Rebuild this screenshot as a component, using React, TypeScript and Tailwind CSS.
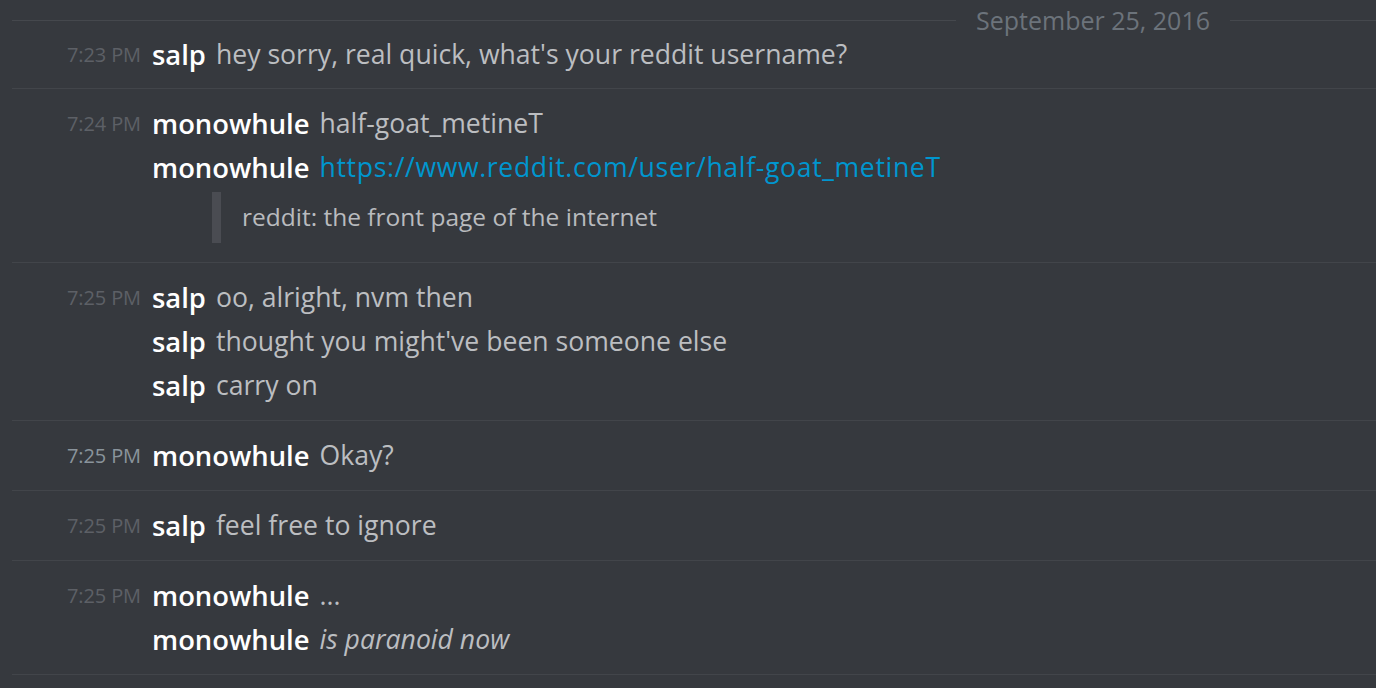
import React from "react";

type Line = { name: string; text: React.ReactNode };
type Group = { time: string; timeClass?: string; lines: Line[]; embed?: string };

const groups: Group[] = [
  { time: "7:23 PM", lines: [{ name: "salp", text: "hey sorry, real quick, what's your reddit username?" }] },
  {
    time: "7:24 PM",
    lines: [
      { name: "monowhule", text: "half-goat_metineT" },
      {
        name: "monowhule",
        text: (
          <span className="text-[#0096cf] tracking-[0.65px]">https://www.reddit.com/user/half-goat_metineT</span>
        ),
      },
    ],
    embed: "reddit: the front page of the internet",
  },
  {
    time: "7:25 PM",
    lines: [
      { name: "salp", text: "oo, alright, nvm then" },
      { name: "salp", text: "thought you might've been someone else" },
      { name: "salp", text: "carry on" },
    ],
  },
  { time: "7:25 PM", timeClass: "text-[#8a949c]", lines: [{ name: "monowhule", text: "Okay?" }] },
  { time: "7:25 PM", lines: [{ name: "salp", text: "feel free to ignore" }] },
  {
    time: "7:25 PM",
    lines: [
      { name: "monowhule", text: "..." },
      { name: "monowhule", text: <em className="italic">is paranoid now</em> },
    ],
  },
];

export default function App() {
  return (
    <div
      className="w-[1376px] h-[688px] overflow-hidden bg-[#36393e] text-[#b9bbbe]"
      style={{ fontFamily: "'Open Sans', Lato, sans-serif" }}
    >
      <div className="flex items-center h-0 mt-[20px]">
        <div className="ml-[12px] flex-1 h-px bg-[#45484d]" />
        <div className="px-[20px] text-[25px] leading-none text-[#6c737b] font-medium">September 25, 2016</div>
        <div className="w-[146px] h-px bg-[#45484d]" />
      </div>
      {groups.map((g, gi) => (
        <div
          key={gi}
          className={"ml-[12px] " + (gi > 0 ? "pt-[13px] pb-[12px] border-t border-[#42454a]" : "pt-[13px] pb-[11px]")}
        >
          {g.lines.map((l, li) => (
            <div key={li} className="flex items-center h-[44px]">
              <div
                className={
                  "w-[140px] shrink-0 pr-[11px] text-right text-[20px] tracking-[-0.1px] whitespace-nowrap " +
                  (g.timeClass ?? "text-[#5d6066]")
                }
              >
                {li === 0 ? g.time : ""}
              </div>
              <span className="text-white font-semibold text-[27.4px]">{l.name}</span>
              <span className="ml-[10px] text-[26.6px] text-[#bcbec1] whitespace-nowrap">{l.text}</span>
            </div>
          ))}
          {g.embed && (
            <div className="flex mt-[2px] ml-[200px] mb-[7px]">
              <div className="w-[9px] h-[51px] bg-[#4a4c52]" />
              <div className="pl-[21px] flex items-center text-[24.5px] text-[#b9bbbe]">{g.embed}</div>
            </div>
          )}
        </div>
      ))}
      <div className="ml-[12px] border-t border-[#42454a]" />
    </div>
  );
}
